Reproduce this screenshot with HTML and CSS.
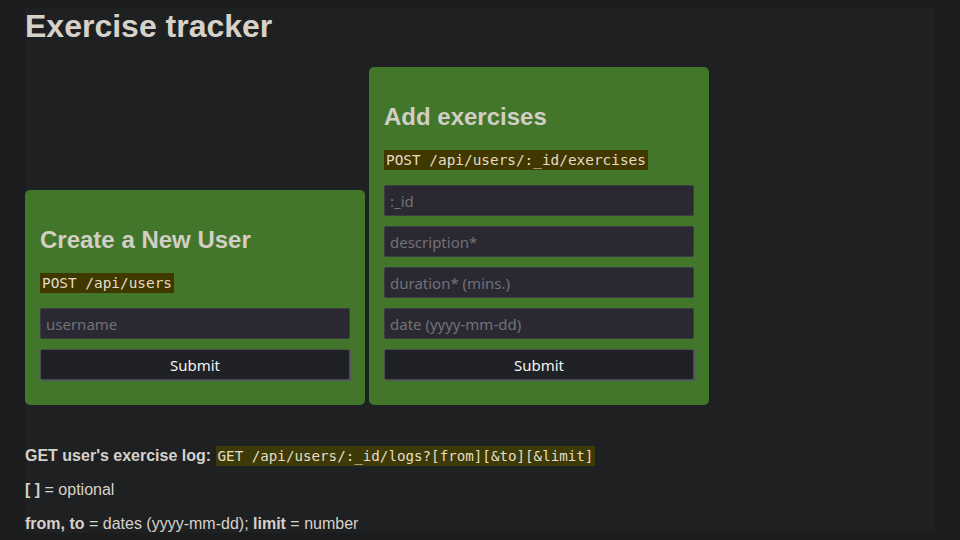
FILE: index.html
```html
<!DOCTYPE html>
<html lang="en">
<head>
<meta charset="utf-8">
<title>Exercise Tracker</title>
<link rel="stylesheet" href="styles.css">
</head>
<body>
<div class="container">
  <h1 class="title">Exercise tracker</h1>
  <div class="forms">
    <form class="card">
      <h2 class="card-title">Create a New User</h2>
      <p class="endpoint"><code>POST /api/users</code></p>
      <input class="field" type="text" placeholder="username">
      <button class="submit" type="button">Submit</button>
    </form>
    <form class="card">
      <h2 class="card-title">Add exercises</h2>
      <p class="endpoint"><code>POST /api/users/:_id/exercises</code></p>
      <input class="field" type="text" placeholder=":_id">
      <input class="field" type="text" placeholder="description*">
      <input class="field" type="text" placeholder="duration* (mins.)">
      <input class="field" type="text" placeholder="date (yyyy-mm-dd)">
      <button class="submit" type="button">Submit</button>
    </form>
  </div>
  <div class="notes">
    <p class="note"><strong>GET user's exercise log:</strong> <code>GET /api/users/:_id/logs?[from][&amp;to][&amp;limit]</code></p>
    <p class="note"><strong>[ ]</strong> = optional</p>
    <p class="note"><strong>from, to</strong> = dates (yyyy-mm-dd); <strong>limit</strong> = number</p>
  </div>
</div>
</body>
</html>
```
FILE: styles.css
```css
html, body {
  background: #1b1c1e;
}
body {
  margin: 8px;
  font-family: "Liberation Sans", Arial, sans-serif;
  color: #d6d2ca;
}
.container {
  width: 910px;
  margin: 0 auto;
  background: #1f2022;
  display: flow-root;
}
.title {
  margin: 0;
  font-size: 32px;
  line-height: 37px;
  font-weight: bold;
  color: #d6d2ca;
}
.forms {
  display: flex;
  align-items: flex-end;
  gap: 4px;
  margin-top: 22px;
}
.card {
  width: 340px;
  box-sizing: border-box;
  padding: 15px 15px 15px;
  background: #42762a;
  border-radius: 5px;
  display: flex;
  flex-direction: column;
}
.card-title {
  margin: 21px 0 17px;
  font-size: 24px;
  line-height: 28px;
  font-weight: bold;
  color: #d2cec6;
}
.endpoint {
  margin: 0 0 13px;
  line-height: 23px;
}
code {
  font-family: "DejaVu Sans Mono", "Liberation Mono", monospace;
  font-size: 14.4px;
  background: #3f3800;
  color: #e4dcc6;
  padding: 2px 2px;
}
.field {
  box-sizing: border-box;
  height: 31px;
  margin: 0 0 10px;
  padding: 0 5px;
  background: #2a2933;
  border: 1px solid #3c3d44;
  border-radius: 2px;
  color: #d6d2ca;
  font-family: "Noto Sans", "Open Sans", sans-serif;
  font-size: 15px;
  outline: none;
}
.field::placeholder {
  color: #727176;
}
.submit {
  box-sizing: border-box;
  height: 31px;
  margin: 0 0 10px;
  background: #1f2124;
  border: 1px solid #4b4e54;
  border-radius: 2px;
  color: #f2f2f2;
  font-family: "Noto Sans", "Open Sans", sans-serif;
  font-size: 15px;
  box-shadow: 1px 1px 0 #53565c;
}
.notes {
  margin-top: 42px;
}
.note {
  margin: 0 0 16px;
  font-size: 16px;
  line-height: 18px;
  color: #d6d2ca;
}
.note:last-child {
  margin-bottom: 0;
}
.note code {
  font-size: 14.2px;
  background: #3d3a08;
  padding: 2px 2px;
}
```
